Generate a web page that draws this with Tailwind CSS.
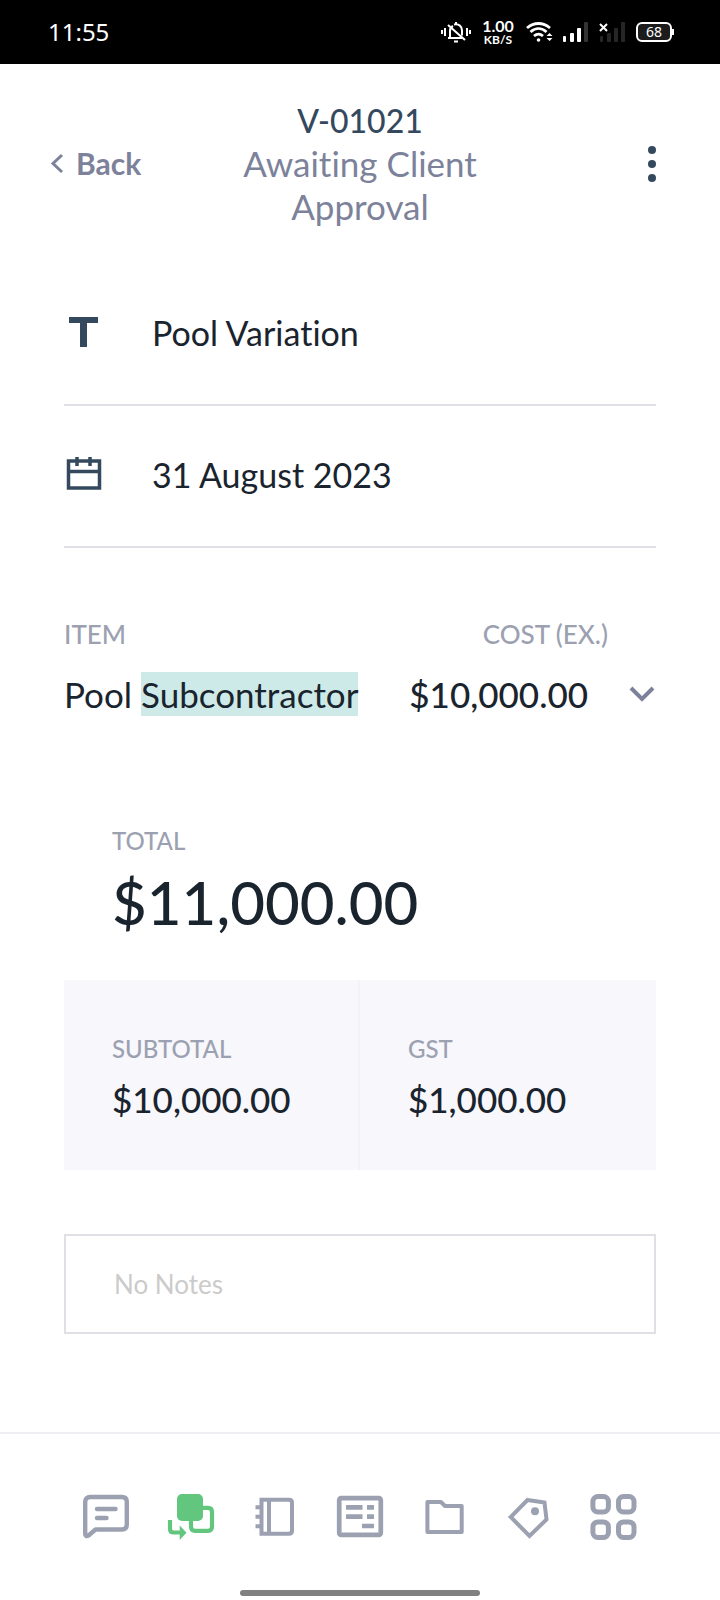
<!DOCTYPE html>
<html lang="en">
  <head>
    <meta charset="utf-8" />
    <meta name="viewport" content="width=device-width, initial-scale=1" />
    <title>V-01021</title>
    <script src="https://cdn.jsdelivr.net/npm/@tailwindcss/browser@4"></script>
  </head>
  <body
    class="min-h-screen flex flex-col bg-white text-[#1a242e] font-['Lato','Liberation_Sans',sans-serif] [font-variant-ligatures:none]"
  >
    <!-- Status bar -->
    <div class="h-16 bg-black text-white flex items-center justify-between pl-12 pr-[46px]">
      <span class="text-2xl font-['Noto_Sans',sans-serif]">11:55</span>
      <div class="flex items-center">
        <svg class="w-8 h-6" viewBox="0 0 32 24" fill="none" stroke="#fff" stroke-width="2">
          <path d="M2 10v4M5 8v8M27 8v8M30 10v4" />
          <path d="M8 18h14M10 18V11c0-2 1-4 3-5M14 4.500c5-1 8 2 8 6v5M16 2v3" />
          <path d="M8 5l17 15M14 21.500h4" />
        </svg>
        <div class="ml-2 w-9 text-center font-bold">
          <div class="text-base leading-[16px]">1.00</div>
          <div class="text-xs leading-[12px]">KB/S</div>
        </div>
        <svg class="ml-2 w-8 h-6" viewBox="0 0 32 24" fill="none" stroke="#fff" stroke-width="2.800">
          <path d="M3 8c7-6 16-6 23 0M6.500 12c5-4.500 11-4.500 16 0M10 16c3-2.500 6-2.500 9 0" />
          <circle cx="14.500" cy="20" r="1.800" fill="#fff" stroke="none" />
          <path d="M22.500 16l3-3 3 3zM22.500 18l3 3 3-3z" fill="#fff" stroke="none" />
        </svg>
        <svg class="ml-1.5 w-7 h-6" viewBox="0 0 28 24" fill="#fff">
          <rect x="1" y="16" width="3" height="6" rx="1" />
          <rect x="8" y="13" width="4" height="9" rx="1" />
          <rect x="15" y="8" width="4" height="14" rx="1" />
          <rect x="22" y="2" width="4" height="20" rx="1" fill="#333" />
        </svg>
        <svg class="ml-2 w-7 h-6" viewBox="0 0 28 24" fill="#262626">
          <rect x="2" y="16" width="3" height="6" rx="1" />
          <rect x="9" y="13" width="4" height="9" rx="1" />
          <rect x="16" y="8" width="4" height="14" rx="1" />
          <rect x="23" y="2" width="4" height="20" rx="1" />
          <path d="M2 4l7 7M9 4l-7 7" stroke="#fff" stroke-width="2" />
        </svg>
        <div class="ml-2.5 flex items-center">
          <div
            class="w-9 h-5 border-2 border-white rounded-md bg-[#1c1c1c] flex items-center justify-center text-sm leading-none font-['Noto_Sans',sans-serif]"
          >
            68
          </div>
          <div class="w-0.5 h-1.5 bg-white"></div>
        </div>
      </div>
    </div>

    <!-- Header -->
    <header class="grid grid-cols-[1fr_auto_1fr] items-center px-12 pt-[35px]">
      <a href="#" class="flex items-center gap-3 text-[30px] font-bold text-[#7d829b]">
        <svg class="w-4 h-6" viewBox="0 0 16 24" fill="none" stroke="currentColor" stroke-width="3">
          <path d="M14 3L5 11.500l9 8.500" />
        </svg>
        Back
      </a>
      <div class="w-60 text-center text-[35px] leading-[43px]">
        <h1 class="text-[32px] font-medium text-[#34495e]">V-01021</h1>
        <p class="text-[#7d829b]">Awaiting Client Approval</p>
      </div>
      <button class="justify-self-end mr-2" aria-label="More">
        <svg class="w-6 h-10" viewBox="0 0 24 40" fill="#34495e">
          <circle cx="12" cy="6" r="4" />
          <circle cx="12" cy="20" r="4" />
          <circle cx="12" cy="34" r="4" />
        </svg>
      </button>
    </header>

    <main class="px-16 pt-9 text-[35px] leading-[44px]">
      <!-- Details -->
      <div class="flex items-center gap-12 h-[142px] border-b-2 border-[#dee0e6] text-[34px]">
        <svg class="w-10 h-10" viewBox="0 0 40 40" fill="#34495e">
          <rect x="5" y="3" width="29" height="6" />
          <rect x="16" y="3" width="7" height="30" />
        </svg>
        <span class="pb-0.5">Pool Variation</span>
      </div>
      <div class="flex items-center gap-12 h-[142px] border-b-2 border-[#dee0e6] text-[34px]">
        <svg class="w-10 h-10" viewBox="0 0 40 40" fill="none" stroke="#34495e" stroke-width="3.500">
          <rect x="4.500" y="5" width="31" height="27" />
          <path d="M4 15.500h32M13 1v9M26 1v9" />
        </svg>
        <span class="pb-0.5">31 August 2023</span>
      </div>

      <!-- Items -->
      <table class="w-full mt-[66px]">
        <thead>
          <tr class="text-[26px] leading-[40px] text-[#9ca1b1]">
            <th class="text-left font-medium">ITEM</th>
            <th class="text-right font-medium pr-12" colspan="2">COST (EX.)</th>
          </tr>
        </thead>
        <tbody>
          <tr>
            <td class="pt-[18px]">
              Pool <mark class="inline-block bg-[#cdeae8] text-inherit">Subcontractor</mark>
            </td>
            <td class="pt-[18px] text-right font-medium">$10,000.00</td>
            <td class="pt-[18px] w-[68px]">
              <button class="block ml-auto" aria-label="Expand">
                <svg class="w-7 h-6" viewBox="0 0 28 24" fill="none" stroke="#7d829b" stroke-width="4">
                  <path d="M3 6l11 11L25 6" />
                </svg>
              </button>
            </td>
          </tr>
        </tbody>
      </table>

      <!-- Totals -->
      <dl class="mt-[105px] px-12 font-medium">
        <dt class="text-2xl leading-[40px] text-[#9ca1b1]">TOTAL</dt>
        <dd class="text-[60px] leading-[82px]">$11,000.00</dd>
      </dl>
      <dl class="mt-[37px] grid grid-cols-2 bg-[#f7f7fc] font-medium">
        <div class="px-12 pt-[49px] pb-[49px] border-r-2 border-[#f2f2f7]">
          <dt class="text-2xl leading-[40px] text-[#9ca1b1]">SUBTOTAL</dt>
          <dd class="pt-2">$10,000.00</dd>
        </div>
        <div class="px-12 pt-[49px] pb-[49px]">
          <dt class="text-2xl leading-[40px] text-[#9ca1b1]">GST</dt>
          <dd class="pt-2">$1,000.00</dd>
        </div>
      </dl>

      <!-- Notes -->
      <input
        type="text"
        aria-label="Notes"
        placeholder="No Notes"
        class="block mt-16 mb-24 w-full h-[100px] px-12 border-2 border-[#dee0e6] text-[26px] placeholder:text-[#cbcbcb]"
      />
    </main>

    <!-- Bottom navigation -->
    <nav class="mt-auto border-t-2 border-[#f0f0f4] px-16 pt-[58px] pb-1 text-[#9ca1b1]">
      <div class="grid grid-cols-7 justify-items-center">
        <a href="#" aria-label="Messages">
          <svg class="w-12 h-12" viewBox="0 0 48 48" fill="none" stroke="currentColor" stroke-width="4.400" stroke-linecap="round" stroke-linejoin="round">
            <path d="M3.200 42V10q0-5 5-5h31.600q5 0 5 5v22.500q0 5-5 5H13.500l-7 6q-3.300 1.500-3.300-1.500z" />
            <path d="M15 17h18.500M15 26h9.500" />
          </svg>
        </a>
        <a href="#" aria-label="Variations" class="text-[#63c67e]">
          <svg class="w-12 h-12" viewBox="0 0 48 48" fill="none" stroke="currentColor" stroke-width="4.200">
            <rect x="10" y="2" width="26" height="27" rx="5" fill="currentColor" stroke="none" />
            <path d="M35 15.800h6q4 0 4 4v15q0 4-4 4H28q-4 0-4-4V27" />
            <path d="M3 28v9q0 3.500 3.500 3.500H14" />
            <path d="M12.700 33.500v14.500l6.800-7.200z" fill="currentColor" stroke="none" />
          </svg>
        </a>
        <a href="#" aria-label="Diary">
          <svg class="w-12 h-12" viewBox="0 0 48 48" fill="none" stroke="currentColor" stroke-width="4">
            <path d="M10.500 7.800H38q3 0 3 3v28q0 3-3 3H10.500zM18 7v35" />
            <path d="M4.500 15.300H10M4.500 24.700H10M4.500 34.300H10" />
          </svg>
        </a>
        <a href="#" aria-label="Invoices">
          <svg class="w-12 h-12" viewBox="0 0 48 48" fill="none" stroke="currentColor" stroke-width="4.700">
            <rect x="3.200" y="6.200" width="41.600" height="36.600" rx="2" />
            <path d="M10 15.300h16.500M31 15.300h7M10 24.700h16.500M31 24.700h7M26 34h12" />
          </svg>
        </a>
        <a href="#" aria-label="Files">
          <svg class="w-12 h-12" viewBox="0 0 48 48" fill="none" stroke="currentColor" stroke-width="4" stroke-linejoin="round">
            <path d="M6.400 10H20l4 4h16.700v26H6.400z" />
          </svg>
        </a>
        <a href="#" aria-label="Prices">
          <svg class="w-12 h-12" viewBox="0 0 48 48" fill="none" stroke="currentColor" stroke-width="4">
            <path d="M22.500 8l17 2.500 2 17-17 16.500L5.700 25z" />
            <circle cx="30" cy="19.300" r="4" fill="currentColor" stroke="none" />
          </svg>
        </a>
        <a href="#" aria-label="More apps">
          <svg class="w-12 h-12" viewBox="0 0 48 48" fill="none" stroke="currentColor" stroke-width="5">
            <rect x="2.900" y="4.500" width="15.500" height="15.500" rx="5" />
            <rect x="28.500" y="4.500" width="15.500" height="15.500" rx="5" />
            <rect x="2.900" y="29.900" width="15.500" height="15.500" rx="5" />
            <rect x="28.500" y="29.900" width="15.500" height="15.500" rx="5" />
          </svg>
        </a>
      </div>
      <div class="mt-[50px] mx-auto w-60 h-1.5 rounded-full bg-[#808080]"></div>
    </nav>
  </body>
</html>
